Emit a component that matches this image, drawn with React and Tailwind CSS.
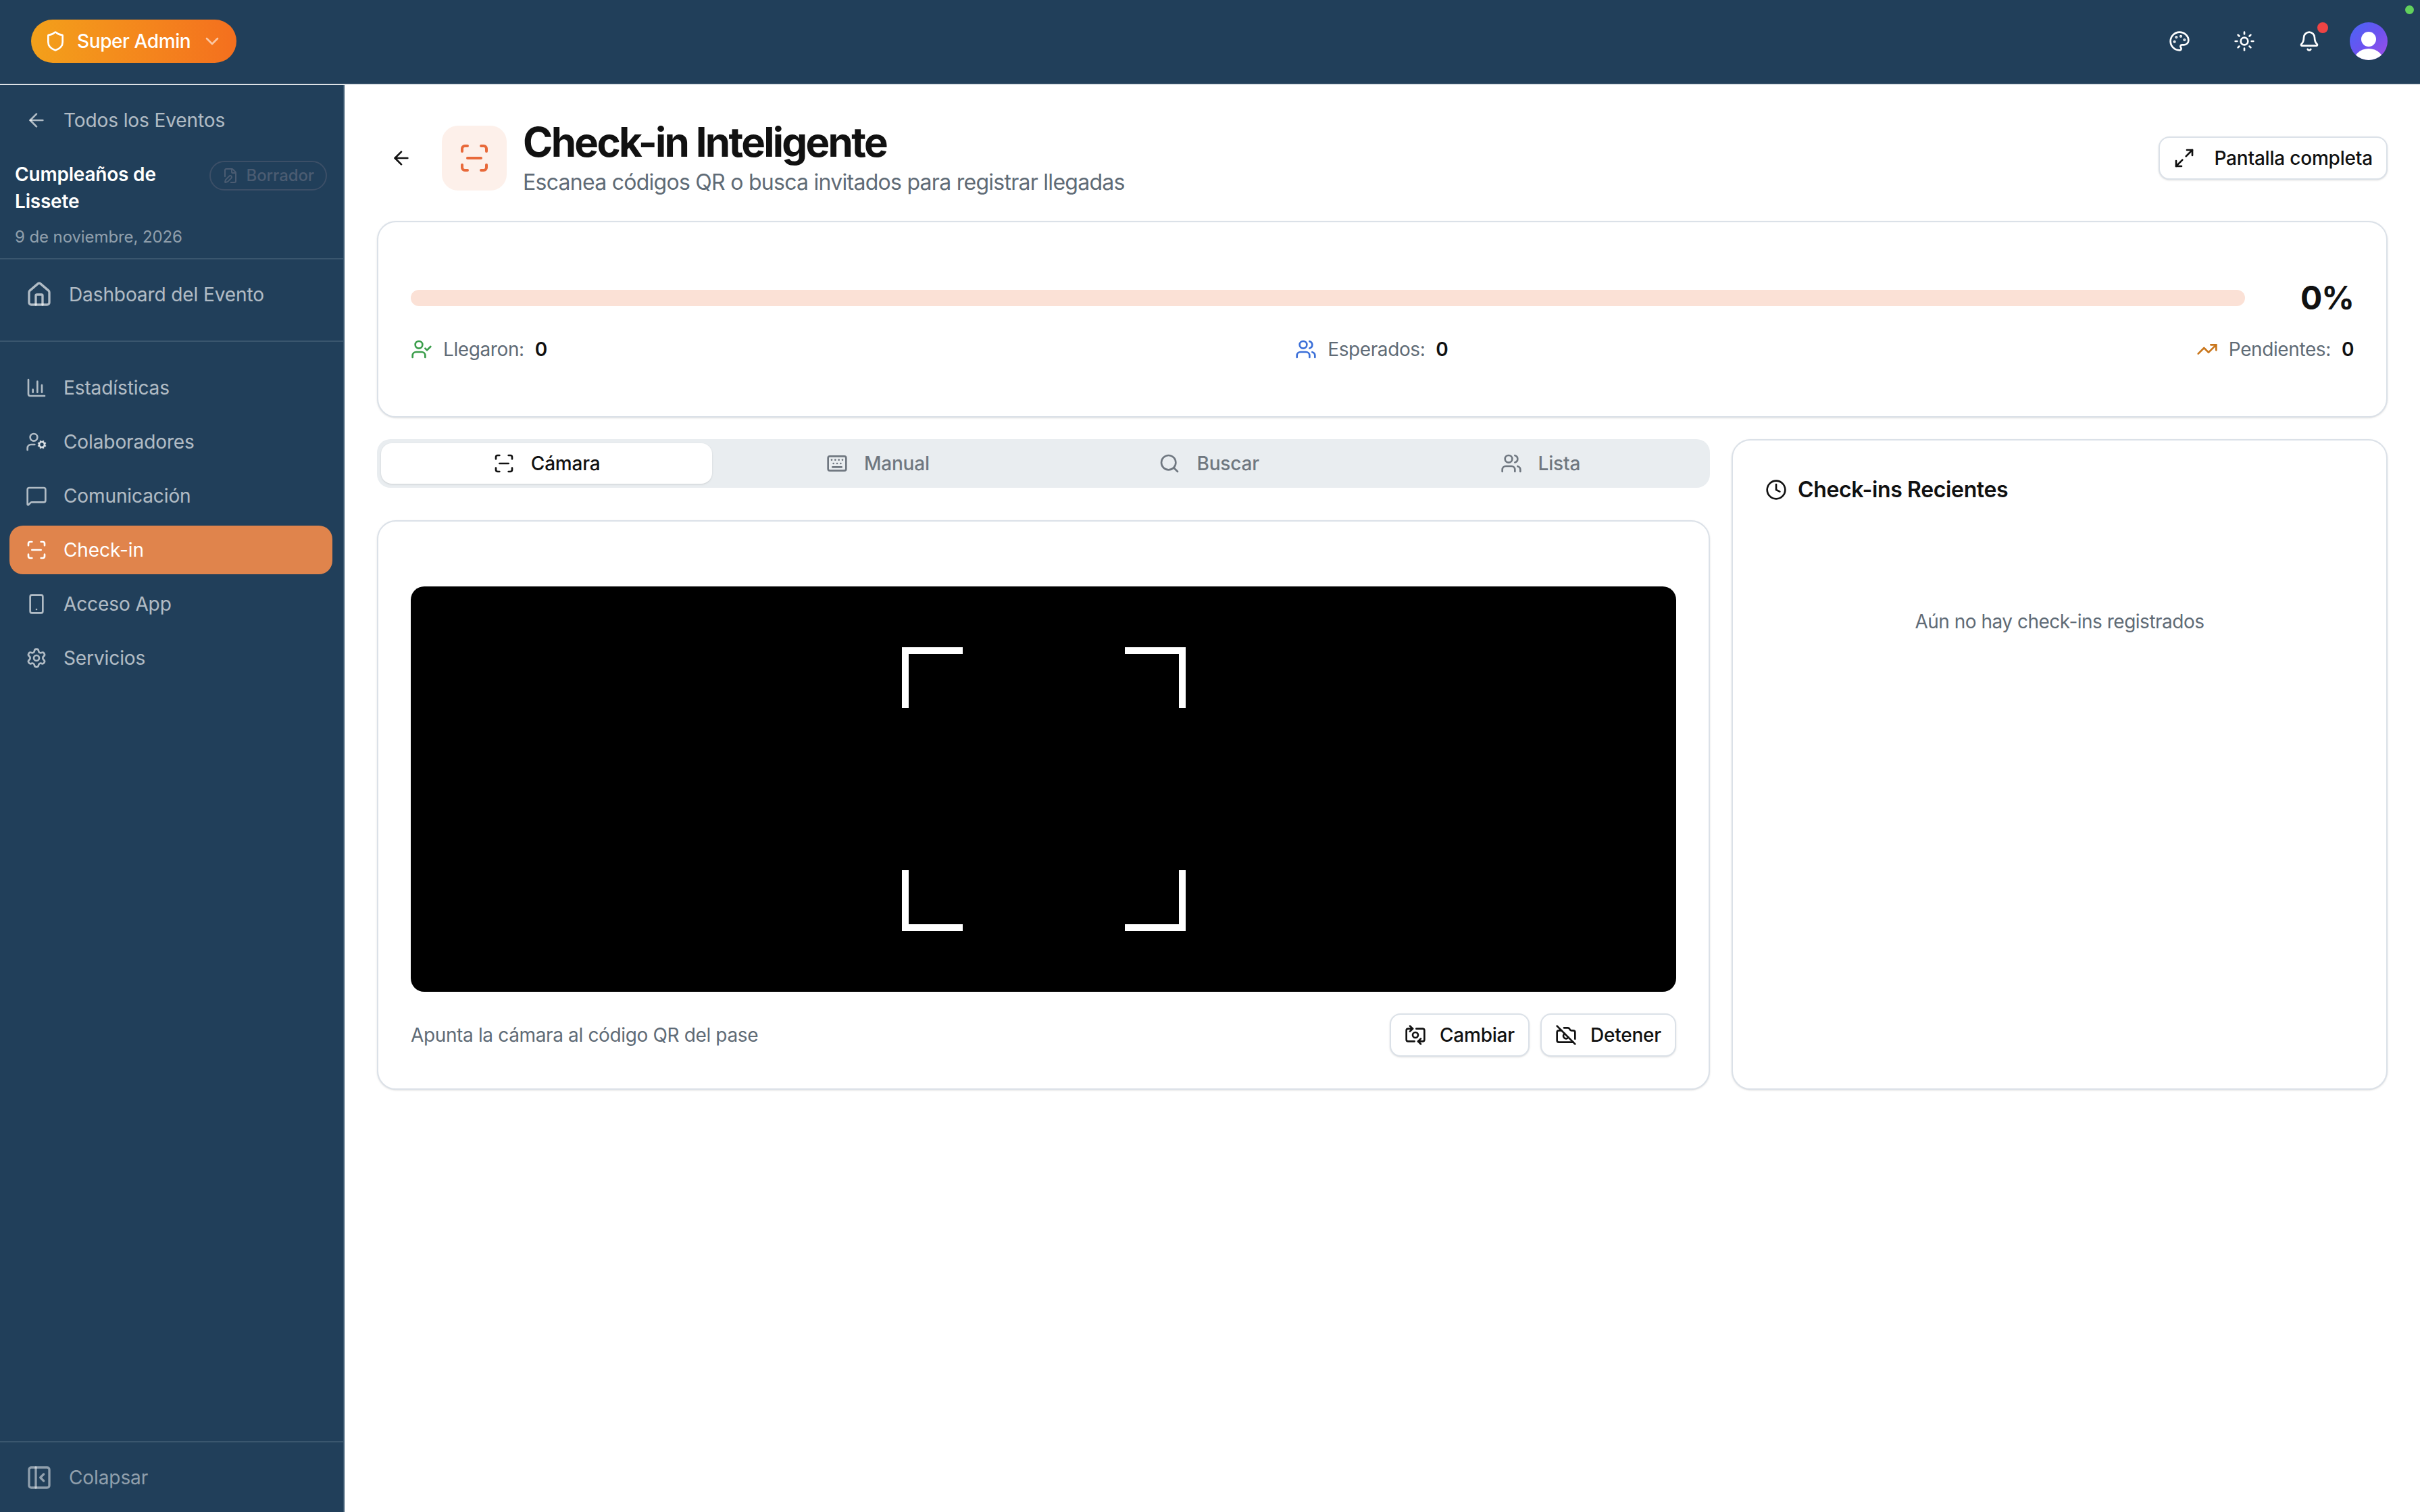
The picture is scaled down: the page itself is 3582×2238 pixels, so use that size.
import {
  ArrowLeft, ChartColumn, ChevronDown, Bell, CameraOff, Clock, FilePen, House, Keyboard, Maximize2,
  MessageSquare, Palette, PanelLeftClose, ScanLine, Search, Settings, Shield, Smartphone, Sun,
  SwitchCamera, TrendingUp, UserCheck, UserCog, Users,
} from 'lucide-react'

const navItems = [
  { label: 'Estadísticas', icon: ChartColumn },
  { label: 'Colaboradores', icon: UserCog },
  { label: 'Comunicación', icon: MessageSquare },
  { label: 'Check-in', icon: ScanLine, active: true },
  { label: 'Acceso App', icon: Smartphone },
  { label: 'Servicios', icon: Settings },
]

const tabs = [
  { label: 'Cámara', icon: ScanLine, active: true },
  { label: 'Manual', icon: Keyboard },
  { label: 'Buscar', icon: Search },
  { label: 'Lista', icon: Users },
]

function TopBar() {
  return (
    <header className="relative h-[126px] shrink-0 flex items-center justify-between pl-[46px] pr-[48px] pb-[2px] bg-[#213f5a] border-b-2 border-[#dde2e6]">
      <button className="h-[64px] flex items-center gap-4 pl-5 pr-5 rounded-full bg-linear-to-r from-[#f3a01a] to-[#f46f1e] text-white text-[28px] leading-[40px] font-medium tracking-[-0.4px]">
        <Shield size={32} />
        <span>Super Admin</span>
        <ChevronDown size={32} className="text-white/60" />
      </button>
      <div className="flex items-center">
        <button className="w-[96px] h-[64px] flex items-center justify-center text-white"><Palette size={32} /></button>
        <button className="w-[96px] h-[64px] flex items-center justify-center text-white"><Sun size={32} /></button>
        <button className="relative w-[96px] h-[64px] flex items-center justify-center text-white">
          <Bell size={32} />
          <span className="absolute top-[4px] right-[20px] w-4 h-4 rounded-full bg-[#ef4444]" />
        </button>
        <div className="ml-[12px] w-[56px] h-[56px] rounded-full overflow-hidden bg-linear-to-br from-[#4366f6] via-[#6a52f0] to-[#a24ce8]">
          <svg viewBox="0 0 56 56" className="w-full h-full">
            <circle cx="28" cy="25" r="11" fill="#fff" />
            <ellipse cx="28" cy="60" rx="23" ry="21" fill="#fff" />
          </svg>
        </div>
      </div>
      <span className="absolute top-[8px] right-[9px] w-[13px] h-[13px] rounded-full bg-[#62d15c]" />
    </header>
  )
}

function Sidebar() {
  return (
    <aside className="w-[510px] shrink-0 flex flex-col bg-[#213f5a] border-r-2 border-[#3d5a72] tracking-[-0.1px]">
      <div className="ml-[14px] mr-[16px] mt-[32px] px-6 h-[40px] flex items-center gap-6 text-white/65 text-[28px] leading-[40px]">
        <ArrowLeft size={32} />
        <span>Todos los Eventos</span>
      </div>
      <div className="pl-[22px] pr-[24px] pt-[40px] pb-[15px] border-b-2 border-[#3a566e]">
        <div className="flex items-start justify-between gap-4">
          <div className="text-white text-[28px] leading-[40px] font-semibold tracking-[-0.2px]">Cumpleaños de Lissete</div>
          <span className="shrink-0 h-[44px] px-[17px] flex items-center gap-3 rounded-full border-2 border-[#3c4f67] text-[#4b5c72] text-[24px] leading-[32px] font-medium">
            <FilePen size={24} />
            Borrador
          </span>
        </div>
        <div className="mt-[17px] text-white/50 text-[24px] leading-[32px]">9 de noviembre, 2026</div>
      </div>
      <div className="pt-[16px] pb-[32px] border-b-2 border-[#3a566e]">
        <div className="ml-[14px] mr-[16px] px-6 h-[72px] flex items-center gap-6 text-white/65 text-[28px] leading-[40px]">
          <House size={40} />
          <span>Dashboard del Evento</span>
        </div>
      </div>
      <nav className="pt-[32px] flex flex-col gap-2">
        {navItems.map((item) => (
          <a
            key={item.label}
            className={`ml-[14px] mr-[16px] px-6 h-[72px] flex items-center gap-6 rounded-[20px] text-[28px] leading-[40px] ${item.active ? 'bg-[#e0844c] text-white' : 'text-white/65'}`}
          >
            <item.icon size={32} />
            <span>{item.label}</span>
          </a>
        ))}
      </nav>
      <div className="mt-auto h-[105px] flex items-center gap-6 pl-[38px] border-t-2 border-[#3a566e] text-white/50 text-[28px] leading-[40px]">
        <PanelLeftClose size={40} />
        <span>Colapsar</span>
      </div>
    </aside>
  )
}

function Stat({ icon: Icon, iconClass, label, value }) {
  return (
    <div className="flex items-center gap-4 text-[28px] leading-[40px] tracking-[-0.4px]">
      <Icon size={32} className={iconClass} />
      <span className="text-[#5f6b76]">{label}</span>
      <span className="text-[#111] font-semibold">{value}</span>
    </div>
  )
}

function Corner({ className }) {
  return <span className={`absolute w-[90px] h-[90px] border-white ${className}`} />
}

function Camera() {
  return (
    <div className="h-[600px] rounded-[20px] bg-black flex items-center justify-center">
      <div className="relative w-[420px] h-[420px]">
        <Corner className="top-0 left-0 border-t-[10px] border-l-[10px]" />
        <Corner className="top-0 right-0 border-t-[10px] border-r-[10px]" />
        <Corner className="bottom-0 left-0 border-b-[10px] border-l-[10px]" />
        <Corner className="bottom-0 right-0 border-b-[10px] border-r-[10px]" />
      </div>
    </div>
  )
}

function OutlineButton({ icon: Icon, gap = 'gap-5', children }) {
  return (
    <button className={`h-[64px] flex items-center ${gap} px-5 rounded-[16px] border-2 border-[#dbe1e8] bg-white shadow-sm text-[#111] text-[28px] leading-[40px] font-medium tracking-[-0.2px]`}>
      <Icon size={32} />
      {children}
    </button>
  )
}

export default function App() {
  return (
    <div className="h-screen flex flex-col bg-white font-['Inter',sans-serif] overflow-hidden">
      <TopBar />
      <div className="flex-1 flex min-h-0">
        <Sidebar />
        <main className="flex-1 min-w-0 px-[48px] pt-[60px]">
          <div className="h-[96px] flex items-center justify-between">
            <div className="flex items-center">
              <button className="ml-[20px] mr-[44px] text-[#111]"><ArrowLeft size={32} /></button>
              <div className="w-[96px] h-[96px] rounded-[24px] bg-[#fdf0ea] flex items-center justify-center text-[#e8693a]">
                <ScanLine size={48} />
              </div>
              <div className="ml-[24px]">
                <h1 className="text-[60px] leading-[72px] font-bold tracking-[-2.7px] text-[#111]">Check-in Inteligente</h1>
                <p className="text-[32px] leading-[48px] tracking-[-0.73px] text-[#5f6b76]">Escanea códigos QR o busca invitados para registrar llegadas</p>
              </div>
            </div>
            <OutlineButton icon={Maximize2} gap="gap-7">Pantalla completa</OutlineButton>
          </div>

          <section className="mt-[45px] px-[48px] pt-[80px] pb-[79px] rounded-[28px] border-2 border-[#dbe1e8] bg-white shadow-sm">
            <div className="flex items-center gap-[82px]">
              <div className="flex-1 h-[24px] rounded-full bg-[#fbe1d6]" />
              <span className="text-[48px] leading-[64px] font-bold tracking-[-1px] text-[#111]">0%</span>
            </div>
            <div className="mt-[24px] flex items-center justify-between">
              <Stat icon={UserCheck} iconClass="text-[#3a9d4a]" label="Llegaron:" value="0" />
              <Stat icon={Users} iconClass="text-[#3b6fd8]" label="Esperados:" value="0" />
              <Stat icon={TrendingUp} iconClass="text-[#c9751a]" label="Pendientes:" value="0" />
            </div>
          </section>

          <div className="mt-[32px] grid grid-cols-[1973px_1fr] gap-[32px]">
            <div>
              <div className="h-[72px] p-[6px] grid grid-cols-4 rounded-[20px] bg-[#e9edf0]">
                {tabs.map((tab) => (
                  <button
                    key={tab.label}
                    className={`flex items-center justify-center gap-6 rounded-[16px] text-[28px] leading-[40px] font-medium tracking-[-0.2px] ${tab.active ? 'bg-white text-[#111] shadow-sm' : 'text-[#6f7780]'}`}
                  >
                    <tab.icon size={32} />
                    {tab.label}
                  </button>
                ))}
              </div>
              <section className="mt-[48px] px-[48px] pt-[96px] pb-[47px] rounded-[28px] border-2 border-[#dbe1e8] bg-white shadow-sm">
                <Camera />
                <div className="mt-[32px] flex items-center justify-between">
                  <span className="text-[28px] leading-[40px] tracking-[-0.36px] text-[#5f6b76]">Apunta la cámara al código QR del pase</span>
                  <div className="flex gap-4">
                    <OutlineButton icon={SwitchCamera}>Cambiar</OutlineButton>
                    <OutlineButton icon={CameraOff}>Detener</OutlineButton>
                  </div>
                </div>
              </section>
            </div>
            <section className="px-[48px] pt-[49px] pb-[48px] rounded-[28px] border-2 border-[#dbe1e8] bg-white shadow-sm">
              <h2 className="flex items-center gap-4 text-[32px] leading-[48px] font-semibold tracking-[-0.36px] text-[#111]">
                <Clock size={32} />
                Check-ins Recientes
              </h2>
              <p className="mt-[151px] text-center text-[28px] leading-[40px] tracking-[-0.5px] text-[#5f6b76]">Aún no hay check-ins registrados</p>
            </section>
          </div>
        </main>
      </div>
    </div>
  )
}
